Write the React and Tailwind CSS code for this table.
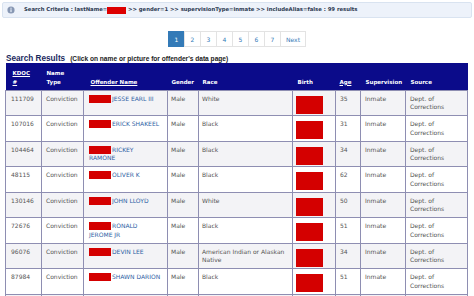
import React from 'react';

const rows = [
    { id: '111709', name: ['JESSE EARL III'], race: ['White'], age: '35' },
    { id: '107016', name: ['ERICK SHAKEEL'], race: ['Black'], age: '31' },
    { id: '104464', name: ['RICKEY', 'RAMONE'], race: ['Black'], age: '34' },
    { id: '48115', name: ['OLIVER K'], race: ['Black'], age: '62' },
    { id: '130146', name: ['JOHN LLOYD'], race: ['White'], age: '50' },
    { id: '72676', name: ['RONALD', 'JEROME JR'], race: ['Black'], age: '51' },
    { id: '96076', name: ['DEVIN LEE'], race: ['American Indian or Alaskan', 'Native'], age: '34' },
    { id: '87984', name: ['SHAWN DARION'], race: ['Black'], age: '51' },
];

const pages = ['1', '2', '3', '4', '5', '6', '7'];

const cell = 'align-top border border-[#8e8eb2]';

export default function App() {
    return (
        <div className="w-[474px] h-[296px] overflow-hidden bg-white font-['DejaVu_Sans',sans-serif]">
            {/* Search criteria bar */}
            <div className="mx-[2px] mt-[2px] h-[16px] flex items-center bg-[#edf2fa] border border-[#d9e3f0] rounded-[2px]">
                <svg width="8" height="8" viewBox="0 0 8 8" className="ml-[4px]">
                    <circle cx="4" cy="4" r="3.6" fill="#8797b3" />
                    <rect x="3.4" y="3.3" width="1.2" height="2.8" fill="#e8eef8" />
                    <rect x="3.4" y="1.7" width="1.2" height="1.1" fill="#e8eef8" />
                </svg>
                <span className="ml-[9px] text-[5.3px] font-bold text-[#2b3850] whitespace-nowrap flex items-center">
                    Search Criteria : lastName=
                    <span className="inline-block w-[19px] h-[7px] bg-[#dd0000]" />
                    &nbsp;&gt;&gt; gender=1 &gt;&gt; supervisionType=inmate &gt;&gt; includeAlias=false : 99 results
                </span>
            </div>

            {/* Pagination */}
            <div className="mt-[13px] flex justify-center">
                <div className="flex h-[16px] text-[6px]">
                    {pages.map((p, i) => (
                        <div key={p}
                            className={i === 0
                                ? 'w-[17px] flex items-center justify-center bg-[#337ab7] border border-[#337ab7] text-white'
                                : '-ml-px w-[17px] flex items-center justify-center border border-[#e3e3e3] text-[#337ab7]'}>
                            {p}
                        </div>
                    ))}
                    <div className="-ml-px w-[26px] flex items-center justify-center border border-[#e3e3e3] text-[#337ab7]">
                        Next
                    </div>
                </div>
            </div>

            {/* Heading */}
            <div className="mt-[5px] h-[11px] px-[6px] flex items-end whitespace-nowrap">
                <span className="font-['Liberation_Sans',Arial,sans-serif] font-bold text-[8.2px] leading-[9px] text-[#1b2a5e]">
                    Search Results
                </span>
                <span className="ml-[5px] font-['Liberation_Sans',Arial,sans-serif] font-bold text-[6.6px] leading-[9px] text-[#222]">
                    (Click on name or picture for offender's data page)
                </span>
            </div>

            {/* Results table */}
            <table className="ml-[5px] w-[462px] table-fixed border-collapse text-[6px] leading-[8.5px] text-[#555]">
                <colgroup>
                    <col className="w-[36px]" />
                    <col className="w-[42px]" />
                    <col className="w-[84px]" />
                    <col className="w-[31px]" />
                    <col className="w-[94px]" />
                    <col className="w-[43px]" />
                    <col className="w-[25px]" />
                    <col className="w-[45px]" />
                    <col className="w-[62px]" />
                </colgroup>
                <thead>
                    <tr className="h-[27px] bg-[#0b0b8a] text-white text-[5.5px] leading-[9px] font-bold text-left">
                        <th className="align-bottom pl-[7px] pb-[3px]">
                            <span className="underline">KDOC</span><br /><span className="underline">#</span>
                        </th>
                        <th className="align-bottom pl-[5px] pb-[3px]">Name<br />Type</th>
                        <th className="align-bottom pl-[7px] pb-[3px]"><span className="underline">Offender Name</span></th>
                        <th className="align-bottom pl-[4px] pb-[3px]">Gender</th>
                        <th className="align-bottom pl-[4px] pb-[3px]">Race</th>
                        <th className="align-bottom pl-[5px] pb-[3px]">Birth</th>
                        <th className="align-bottom pl-[4px] pb-[3px]"><span className="underline">Age</span></th>
                        <th className="align-bottom pl-[5px] pb-[3px]">Supervision</th>
                        <th className="align-bottom pl-[5px] pb-[3px]">Source</th>
                    </tr>
                </thead>
                <tbody>
                    {rows.map((r, i) => (
                        <tr key={r.id} className={i % 2 === 0 ? 'h-[25.5px] bg-[#f3f3f6]' : 'h-[25.5px] bg-white'}>
                            <td className={`${cell} pt-[4px] pl-[5px]`}>{r.id}</td>
                            <td className={`${cell} pt-[4px] pl-[4px]`}>Conviction</td>
                            <td className={`${cell} pt-[4px] pl-[5px] text-[#2f5fa5] whitespace-nowrap`}>
                                <span className="inline-block align-top w-[22px] h-[8px] mr-[1px] bg-[#d40000]" />
                                {r.name[0]}
                                {r.name[1] && <><br />{r.name[1]}</>}
                            </td>
                            <td className={`${cell} pt-[4px] pl-[3px]`}>Male</td>
                            <td className={`${cell} pt-[4px] pl-[3px] whitespace-nowrap`}>
                                {r.race[0]}
                                {r.race[1] && <><br />{r.race[1]}</>}
                            </td>
                            <td className={`${cell} pt-[5px] pl-[3px]`}>
                                <div className="w-[27px] h-[18px] bg-[#d40000]" />
                            </td>
                            <td className={`${cell} pt-[4px] pl-[4px]`}>{r.age}</td>
                            <td className={`${cell} pt-[4px] pl-[4px]`}>Inmate</td>
                            <td className={`${cell} pt-[4px] pl-[4px] whitespace-nowrap`}>Dept. of<br />Corrections</td>
                        </tr>
                    ))}
                    {/* next row, only its top edge is in view */}
                    <tr className="h-[25.5px] bg-[#f3f3f6]">
                        {Array.from({ length: 9 }).map((_, k) => (
                            <td key={k} className={cell} />
                        ))}
                    </tr>
                </tbody>
            </table>
        </div>
    );
}
